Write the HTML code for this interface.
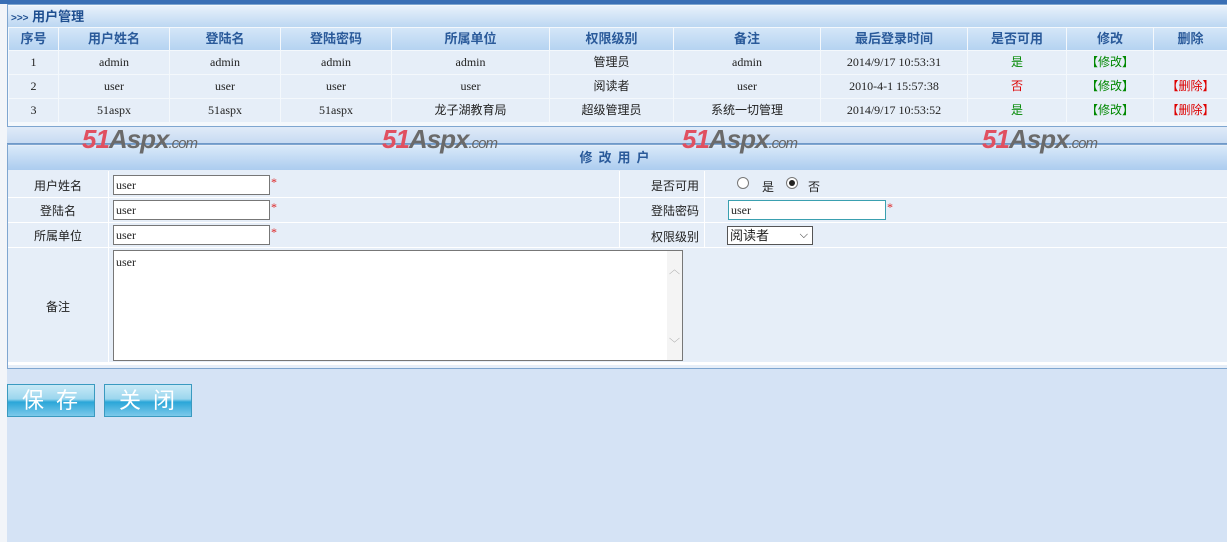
<!DOCTYPE html>
<html><head><meta charset="utf-8"><style>
*{margin:0;padding:0;box-sizing:border-box}
body{width:1227px;height:542px;overflow:hidden;background:#d5e3f5;font-family:"Liberation Serif","Noto Serif CJK SC",serif;font-size:12px;color:#222;position:relative}
.a{position:absolute}
.cn{font-family:"Liberation Sans","Noto Sans CJK SC",sans-serif}
.hd{background:linear-gradient(#d4e6f8,#b5d3f1);color:#2a5a9a;font-weight:bold;text-align:center;line-height:22px;font-size:13px}
.row div{position:absolute;text-align:center;line-height:23px;height:23px;background:#e6eef8;font-size:12px}
.inp{position:absolute;background:#fff;border:1px solid #777;height:20px;font-size:12px;line-height:18px;padding-left:2px}
.lab{position:absolute;text-align:center;font-size:12px}
.star{position:absolute;color:#d22;font-size:12px}
.btn{position:absolute;top:384px;width:88px;height:33px;border:1px solid #3a9ac0;background:linear-gradient(#c8e9f6 0%,#9bd6ee 45%,#2aa6d8 55%,#7cc9ea 100%);color:#fff;font-size:22px;text-align:center;line-height:31px;letter-spacing:12px;padding-left:10px}
.wm{position:absolute;top:124px;font-family:"Liberation Sans",sans-serif;font-weight:bold;font-style:italic;font-size:26px;color:#e05060;letter-spacing:-1px}
.wm b{color:#6a6a6a}.wm i{font-size:15px;color:#666;font-weight:normal}
</style></head><body>
<div class="a" style="left:0;top:0;width:1227px;height:4px;background:#3a6fb5"></div>
<div class="a" style="left:0;top:4px;width:7px;height:538px;background:#f2f5f9"></div>
<div class="a" style="left:7px;top:4px;width:1220px;height:123px;background:#f4f8fc;border:1px solid #7fa6d0;border-right:none"></div>
<div class="a cn" style="left:8px;top:6px;width:1219px;height:21px;background:linear-gradient(#e8f1fb,#bcd7f2);color:#1f4f90;font-weight:bold;font-size:13px;line-height:21px;padding-left:3px"><span style="font-size:10px">&gt;&gt;&gt;</span> 用户管理</div>
<div class="cn">
<div class="a hd" style="left:9px;top:28px;width:49px">序号</div>
<div class="a hd" style="left:59px;top:28px;width:110px">用户姓名</div>
<div class="a hd" style="left:170px;top:28px;width:110px">登陆名</div>
<div class="a hd" style="left:281px;top:28px;width:110px">登陆密码</div>
<div class="a hd" style="left:392px;top:28px;width:157px">所属单位</div>
<div class="a hd" style="left:550px;top:28px;width:123px">权限级别</div>
<div class="a hd" style="left:674px;top:28px;width:146px">备注</div>
<div class="a hd" style="left:821px;top:28px;width:146px">最后登录时间</div>
<div class="a hd" style="left:968px;top:28px;width:98px">是否可用</div>
<div class="a hd" style="left:1067px;top:28px;width:86px">修改</div>
<div class="a hd" style="left:1154px;top:28px;width:73px">删除</div>
</div>
<div class="row">
<div style="left:9px;top:51px;width:49px">1</div><div style="left:59px;top:51px;width:110px">admin</div><div style="left:170px;top:51px;width:110px">admin</div><div style="left:281px;top:51px;width:110px">admin</div><div style="left:392px;top:51px;width:157px">admin</div><div class="cn" style="left:550px;top:51px;width:123px">管理员</div><div style="left:674px;top:51px;width:146px">admin</div><div style="left:821px;top:51px;width:146px">2014/9/17 10:53:31</div><div class="cn" style="left:968px;top:51px;width:98px;color:#080">是</div><div class="cn" style="left:1067px;top:51px;width:86px;color:#080">【修改】</div><div style="left:1154px;top:51px;width:73px"></div>
<div style="left:9px;top:75px;width:49px">2</div><div style="left:59px;top:75px;width:110px">user</div><div style="left:170px;top:75px;width:110px">user</div><div style="left:281px;top:75px;width:110px">user</div><div style="left:392px;top:75px;width:157px">user</div><div class="cn" style="left:550px;top:75px;width:123px">阅读者</div><div style="left:674px;top:75px;width:146px">user</div><div style="left:821px;top:75px;width:146px">2010-4-1 15:57:38</div><div class="cn" style="left:968px;top:75px;width:98px;color:#d00">否</div><div class="cn" style="left:1067px;top:75px;width:86px;color:#080">【修改】</div><div class="cn" style="left:1154px;top:75px;width:73px;color:#d00">【删除】</div>
<div style="left:9px;top:99px;width:49px">3</div><div style="left:59px;top:99px;width:110px">51aspx</div><div style="left:170px;top:99px;width:110px">51aspx</div><div style="left:281px;top:99px;width:110px">51aspx</div><div class="cn" style="left:392px;top:99px;width:157px">龙子湖教育局</div><div class="cn" style="left:550px;top:99px;width:123px">超级管理员</div><div class="cn" style="left:674px;top:99px;width:146px">系统一切管理</div><div style="left:821px;top:99px;width:146px">2014/9/17 10:53:52</div><div class="cn" style="left:968px;top:99px;width:98px;color:#080">是</div><div class="cn" style="left:1067px;top:99px;width:86px;color:#080">【修改】</div><div class="cn" style="left:1154px;top:99px;width:73px;color:#d00">【删除】</div>
</div>
<div class="a" style="left:7px;top:127px;width:1220px;height:17px;background:linear-gradient(#e0ebf8,#c7dbf2);border-bottom:1px solid #6f98c8"></div>
<div class="a" style="left:7px;top:144px;width:1220px;height:225px;background:#e6eef8;border:1px solid #7fa6d0;border-right:none"></div>
<div class="a cn" style="left:8px;top:146px;width:1219px;height:24px;background:linear-gradient(#d9e9f9,#acccef);color:#2a5a9a;font-weight:bold;text-align:center;line-height:24px;font-size:13px;letter-spacing:6px">修改用户</div>
<div class="a" style="left:8px;top:197px;width:1219px;height:1px;background:#fff"></div>
<div class="a" style="left:8px;top:222px;width:1219px;height:1px;background:#fff"></div>
<div class="a" style="left:8px;top:247px;width:1219px;height:1px;background:#fff"></div>
<div class="a" style="left:8px;top:362px;width:1219px;height:3px;background:#fff"></div>
<div class="a" style="left:108px;top:171px;width:1px;height:191px;background:#fff"></div>
<div class="a" style="left:619px;top:171px;width:1px;height:76px;background:#fff"></div>
<div class="a" style="left:704px;top:171px;width:1px;height:76px;background:#fff"></div>
<div class="cn">
<div class="lab" style="left:8px;top:177px;width:100px">用户姓名</div>
<div class="lab" style="left:8px;top:202px;width:100px">登陆名</div>
<div class="lab" style="left:8px;top:227px;width:100px">所属单位</div>
<div class="lab" style="left:8px;top:298px;width:100px">备注</div>
<div class="lab" style="left:620px;top:177px;width:110px">是否可用</div>
<div class="lab" style="left:620px;top:202px;width:110px">登陆密码</div>
<div class="lab" style="left:620px;top:228px;width:110px">权限级别</div>
</div>
<div class="inp" style="left:113px;top:175px;width:157px">user</div><span class="star" style="left:271px;top:175px">*</span>
<div class="inp" style="left:113px;top:200px;width:157px">user</div><span class="star" style="left:271px;top:200px">*</span>
<div class="inp" style="left:113px;top:225px;width:157px">user</div><span class="star" style="left:271px;top:225px">*</span>
<div class="inp" style="left:113px;top:250px;width:570px;height:111px;padding-top:2px">user
<div class="a" style="right:0;top:0;width:15px;height:109px;background:#f4f4f4;color:#aaa;font-size:11px;text-align:center"><div style="margin-top:10px">︿</div><div style="margin-top:56px">﹀</div></div></div>
<div class="inp" style="left:728px;top:200px;width:158px;border-color:#3aa0b0">user</div><span class="star" style="left:887px;top:200px">*</span>
<div class="a" style="left:737px;top:177px;width:12px;height:12px;border:1px solid #777;border-radius:50%;background:#fff"></div>
<span class="a cn" style="left:762px;top:178px">是</span>
<div class="a" style="left:786px;top:177px;width:12px;height:12px;border:1px solid #777;border-radius:50%;background:#fff"><div style="margin:2px;width:6px;height:6px;border-radius:50%;background:#222"></div></div>
<span class="a cn" style="left:808px;top:178px">否</span>
<div class="a cn" style="left:727px;top:226px;width:86px;height:19px;border:1px solid #555;background:#fff;font-size:13px;line-height:17px;padding-left:2px">阅读者<span style="position:absolute;right:4px;top:0;font-size:11px">⌵</span></div>
<div class="wm" style="left:82px">51<b>Aspx</b><i>.com</i></div>
<div class="wm" style="left:382px">51<b>Aspx</b><i>.com</i></div>
<div class="wm" style="left:682px">51<b>Aspx</b><i>.com</i></div>
<div class="wm" style="left:982px">51<b>Aspx</b><i>.com</i></div>
<div class="btn cn" style="left:7px">保存</div>
<div class="btn cn" style="left:104px">关闭</div>
</body></html>
